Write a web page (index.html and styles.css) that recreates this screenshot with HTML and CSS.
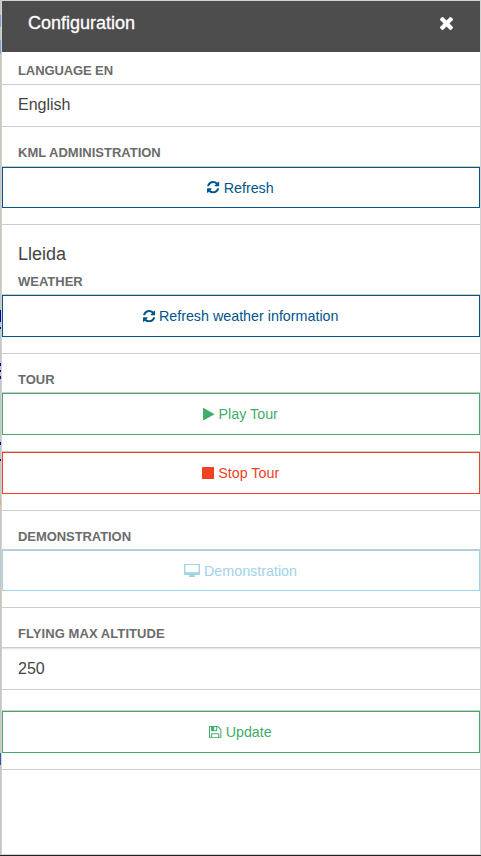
FILE: index.html
```html
<!DOCTYPE html>
<html lang="en">
<head>
<meta charset="utf-8">
<title>Configuration</title>
<link rel="stylesheet" href="styles.css">
</head>
<body>
<svg class="sprite" aria-hidden="true">
  <symbol id="refresh" viewBox="0 0 1536 1536"><path d="M1511 928q0 5-1 7-64 268-268 434.500t-478 166.500q-146 0-282.500-55t-243.500-157l-129 129q-19 19-45 19t-45-19-19-45v-448q0-26 19-45t45-19h448q26 0 45 19t19 45-19 45l-137 137q71 66 161 102t187 36q134 0 250-65t186-179q11-17 53-117 8-23 30-23h192q13 0 22.500 9.500t9.500 22.500zm25-800v448q0 26-19 45t-45 19h-448q-26 0-45-19t-19-45 19-45l138-138q-148-137-349-137-134 0-250 65t-186 179q-11 17-53 117-8 23-30 23h-199q-13 0-22.500-9.500t-9.500-22.500v-7q65-268 270-434.500t480-166.500q146 0 284 55.500t245 156.500l130-129q19-19 45-19t45 19 19 45z"/></symbol>
</svg>
<div class="app">
  <div class="map-edge"></div>
  <main class="panel">
    <header class="bar">
      <h1>Configuration</h1>
      <svg class="close" viewBox="302 366 1188 1188"><path d="M1490 1322q0 40-28 68l-136 136q-28 28-68 28t-68-28l-294-294-294 294q-28 28-68 28t-68-28l-136-136q-28-28-28-68t28-68l294-294-294-294q-28-28-28-68t28-68l136-136q28-28 68-28t68 28l294 294 294-294q28-28 68-28t68 28l136 136q28 28 28 68t-28 68l-294 294 294 294q28 28 28 68z"/></svg>
    </header>
    <section class="language">
      <h2>Language EN</h2>
      <div class="field">English</div>
    </section>
    <section class="kml">
      <h2>KML Administration</h2>
      <div class="action short blue"><svg class="icon"><use href="#refresh"/></svg><span>Refresh</span></div>
    </section>
    <section class="weather">
      <h3>Lleida</h3>
      <h2>Weather</h2>
      <div class="action blue"><svg class="icon"><use href="#refresh"/></svg><span>Refresh weather information</span></div>
    </section>
    <section class="tour">
      <h2>Tour</h2>
      <div class="action green"><svg class="icon play" viewBox="0 0 11 12"><path d="M0 .3Q0-.3.600.1L10.800 5.700Q11.200 6 10.800 6.300L.6 11.900Q0 12.300 0 11.700Z"/></svg><span>Play Tour</span></div>
      <div class="action red"><svg class="icon" viewBox="0 0 12 12"><rect width="12" height="12" rx=".4"/></svg><span>Stop Tour</span></div>
    </section>
    <section class="demo">
      <h2>Demonstration</h2>
      <div class="action short sky"><svg class="icon screen" viewBox="0 0 16 13"><path fill-rule="evenodd" d="M1 0H15Q16 0 16 1V10Q16 11 15 11H10.500Q10.500 12 11 12.300V13H5V12.300Q5.500 12 5.500 11H1Q0 11 0 10V1Q0 0 1 0ZM1.400 1.100V8.300H14.600V1.100Z"/></svg><span>Demonstration</span></div>
    </section>
    <section class="altitude">
      <h2>Flying max altitude</h2>
      <div class="field number">250</div>
      <div class="action update green"><svg class="icon" viewBox="128 128 1536 1536"><path d="M512 1536h768v-384h-768v384zm896 0h128v-896q0-14-10-38.500t-20-34.500l-281-281q-10-10-34-20t-39-10v416q0 40-28 68t-68 28h-576q-40 0-68-28t-28-68v-416h-128v1280h128v-416q0-40 28-68t68-28h832q40 0 68 28t28 68v416zm-384-928v-320q0-13-9.500-22.500t-22.500-9.500h-192q-13 0-22.500 9.500t-9.500 22.500v320q0 13 9.500 22.500t22.500 9.500h192q13 0 22.500-9.500t9.500-22.500zm640 32v928q0 40-28 68t-68 28h-1344q-40 0-68-28t-28-68v-1344q0-40 28-68t68-28h928q40 0 88 20t76 48l280 280q28 28 48 76t20 88z"/></svg><span>Update</span></div>
    </section>
  </main>
</div>
</body>
</html>
```
FILE: styles.css
```css
* { box-sizing: border-box; }
body {
  margin: 0;
  font-family: "Liberation Sans", Arial, sans-serif;
  background: #fff;
  color: #444;
}
.sprite { display: none; }
.app {
  display: flex;
  height: 856px;
  border-bottom: 1px solid #222;
}
.map-edge {
  width: 1px;
  background: linear-gradient(#c9c5bf 0 15px, #7b9fd6 15px 27px, #c9c5bf 27px 40px, #7b9fd6 40px 54px, #c9c4bc 54px 310px, #0000b4 310px 322px, #c4c4c4 322px 327px, #0000b4 327px 329px, #c4c4c4 329px 363px, #0000a8 363px 366px, #c4c4c4 366px 370px, #0000a8 370px 372px, #c4c4c4 372px 376px, #0000a8 376px 379px, #c4c4c4 379px 442px, #0000a8 442px 445px, #c4c4c4 445px 459px, #0000a8 459px 461px, #c4c4c4 461px 499px, #dcb36a 499px 505px, #c4c4c4 505px 590px, #d8be88 590px 595px, #c6c2bc 595px 753px, #2a5db0 753px 765px, #c6c2bc 765px);
}
.panel {
  flex: 1;
  border: 1px solid #d3d3d3;
  background: #fff;
}
.bar {
  display: flex;
  justify-content: space-between;
  height: 51px;
  padding: 0 26px;
  background: #4d4d4d;
  color: #fff;
}
h1, h2, h3 { margin: 0; }
h1 {
  padding-top: 12px;
  font-size: 18px;
  line-height: 20px;
  font-weight: 400;
  -webkit-text-stroke: .3px #fff;
}
.close {
  width: 13px;
  height: 13px;
  margin: 16px 1px 0 0;
  fill: #fff;
}
section {
  padding-top: 17px;
  border-bottom: 1px solid #ccc;
}
h2 {
  height: 22px;
  padding-left: 16px;
  font-size: 13px;
  line-height: 18px;
  font-weight: 700;
  text-transform: uppercase;
  white-space: nowrap;
  color: #6b6b6b;
}
h3 {
  height: 28px;
  padding-left: 16px;
  font-size: 18px;
  line-height: 24px;
  font-weight: 400;
}
.language { padding-top: 10px; }
.language h2 { letter-spacing: -.1px; }
.language .field { border-bottom: 0; height: 42px; }
.kml h2 { height: 23px; }
.weather h2 { height: 25px; padding-top: 3px; }
.demo h2 { letter-spacing: -.07px; }
.altitude h2 { letter-spacing: .07px; }
.field {
  height: 43px;
  padding-left: 16px;
  border: solid #ccc;
  border-width: 1px 0;
  font-size: 16px;
  line-height: 40px;
}
.number {
  line-height: 42px;
  box-shadow: inset 0 2px 2px -1px #ddd;
}
.action {
  display: flex;
  align-items: center;
  justify-content: center;
  height: 42px;
  margin-bottom: 16px;
  padding-right: 1px;
  border: 1px solid currentColor;
  box-shadow: 0 -1px #ccc;
  font-size: 14.3px;
  line-height: 20px;
}
.action + .action { margin-top: 17px; }
.short { height: 41px; }
.field + .update { margin-top: 21px; }
.icon {
  width: 12.4px;
  height: 12.4px;
  margin-right: 4px;
  fill: currentColor;
}
.play { width: 11.4px; }
.screen { width: 16px; height: 13px; }
.blue { color: #00558b; }
.green { color: #43ac6a; }
.red { color: #f04124; }
.sky { color: #a0d3e8; }
```
